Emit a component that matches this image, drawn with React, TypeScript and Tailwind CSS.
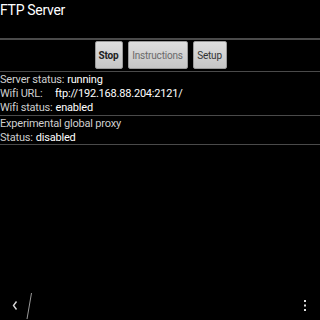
import React from "react";

const rows = [
  [
    { label: "Server status:", value: "running" },
    { label: "Wifi URL:", value: "ftp://192.168.88.204:2121/", url: true },
    { label: "Wifi status:", value: "enabled" },
  ],
  [
    { label: "Experimental global proxy", value: "" },
    { label: "Status:", value: "disabled" },
  ],
];

function Btn({ children, tone }: { children: React.ReactNode; tone: string }) {
  return (
    <button
      className={`h-[28px] px-0 rounded-[2px] bg-gradient-to-b from-[#dedede] to-[#c6c6c6] border border-[#9a9a9a] text-[10px] tracking-[-0.2px] ${tone}`}
    >
      {children}
    </button>
  );
}

export default function App() {
  return (
    <div
      className="w-[320px] h-[320px] bg-black text-white flex flex-col overflow-hidden"
      style={{ fontFamily: "Roboto, 'Liberation Sans', sans-serif" }}
    >
      <div className="h-[38px] pt-[2px] text-[14px] leading-[16px] tracking-[-0.3px]">FTP Server</div>
      <div className="h-[2px] bg-[#4a4a4a]" />
      <div className="h-[31px] flex justify-center items-start pt-[1px] gap-[5px] pl-[1px]">
        <Btn tone="w-[28px] font-bold text-[#222]">Stop</Btn>
        <Btn tone="w-[60px] text-[#6a6a6a]">Instructions</Btn>
        <Btn tone="w-[34px] text-[#333]">Setup</Btn>
      </div>
      <div className="h-[1px] bg-[#4a4a4a]" />
      {rows.map((group, gi) => (
        <div key={gi}>
          <div className="flex flex-col">
            {group.map((r) => (
              <div key={r.label} className="h-[14.3px] flex items-center text-[11px] leading-[13px] tracking-[-0.2px] whitespace-nowrap">
                {r.url ? (
                  <>
                    <span className="text-[#cfcfcf] w-[55px]">{r.label}</span>
                    <span className="text-white">{r.value}</span>
                  </>
                ) : (
                  <>
                    <span className="text-[#cfcfcf]">{r.label}</span>
                    {r.value && <span className="text-white ml-[3px]">{r.value}</span>}
                  </>
                )}
              </div>
            ))}
          </div>
          <div className="h-[1px] bg-[#4a4a4a]" />
        </div>
      ))}
      <div className="flex-1" />
      <div className="h-[32px] flex items-center relative">
        <svg width="320" height="32" viewBox="0 0 320 32" className="absolute left-0 top-0">
          <path d="M16.5 13.5 L13.5 17.5 L16.5 21.5" stroke="#d8d8d8" strokeWidth="1.4" fill="none" />
          <path d="M31.5 5 L27 31" stroke="#9a9a9a" strokeWidth="1" fill="none" />
          <rect x="304" y="12" width="2" height="2" fill="#ddd" />
          <rect x="304" y="16.5" width="2" height="2" fill="#ddd" />
          <rect x="304" y="21" width="2" height="2" fill="#ddd" />
        </svg>
      </div>
    </div>
  );
}
